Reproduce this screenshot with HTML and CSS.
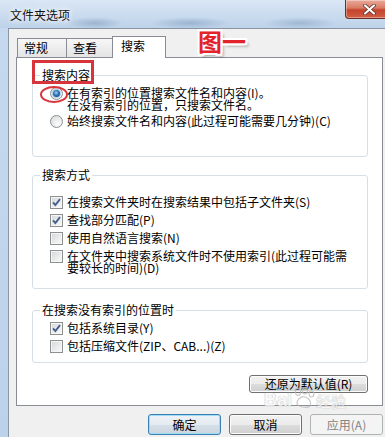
FILE: index.html
```html
<!DOCTYPE html>
<html lang="zh-CN">
<head>
  <meta charset="UTF-8">
  <title>文件夹选项</title>
  <link rel="stylesheet" href="styles.css">
</head>
<body>

  <div class="window">
    <div class="titlebar">
      <span class="title">文件夹选项</span>
      <span class="close">
        <svg width="13" height="11" viewBox="0 0 13 11">
          <path d="M2 1.5 L11 9.5 M11 1.5 L2 9.5" stroke="#5a2a22" stroke-width="3.6" stroke-linecap="round"/>
          <path d="M2 1.5 L11 9.5 M11 1.5 L2 9.5" stroke="#fff" stroke-width="2.2" stroke-linecap="round"/>
        </svg>
      </span>
    </div>

    <div class="client">
      <div class="tabs">
        <div class="tab">常规</div>
        <div class="tab">查看</div>
        <div class="tab active">搜索</div>
      </div>

      <div class="panel">
        <!-- 搜索内容 -->
        <div class="group group-content">
          <div class="legend">搜索内容</div>
          <div class="opts">
            <div class="opt"><span class="rd checked"><span class="dot"></span></span><span class="lines"><span class="line">在有索引的位置搜索文件名和内容(I)。</span><span class="line">在没有索引的位置，只搜索文件名。</span></span></div>
            <div class="opt"><span class="rd"></span><span>始终搜索文件名和内容(此过程可能需要几分钟)(C)</span></div>
          </div>
        </div>

        <!-- 搜索方式 -->
        <div class="group group-mode">
          <div class="legend">搜索方式</div>
          <div class="opts">
            <div class="opt"><span class="cb"><svg width="11" height="11" viewBox="0 0 11 11"><path d="M2 5.3 L4.4 8 L9 2.2" fill="none" stroke="#44608c" stroke-width="1.9"/></svg></span><span>在搜索文件夹时在搜索结果中包括子文件夹(S)</span></div>
            <div class="opt"><span class="cb"><svg width="11" height="11" viewBox="0 0 11 11"><path d="M2 5.3 L4.4 8 L9 2.2" fill="none" stroke="#44608c" stroke-width="1.9"/></svg></span><span>查找部分匹配(P)</span></div>
            <div class="opt"><span class="cb"></span><span>使用自然语言搜索(N)</span></div>
            <div class="opt"><span class="cb"></span><span class="lines"><span class="line">在文件夹中搜索系统文件时不使用索引(此过程可能需</span><span class="line">要较长的时间)(D)</span></span></div>
          </div>
        </div>

        <!-- 在搜索没有索引的位置时 -->
        <div class="group group-noindex">
          <div class="legend">在搜索没有索引的位置时</div>
          <div class="opts">
            <div class="opt"><span class="cb"><svg width="11" height="11" viewBox="0 0 11 11"><path d="M2 5.3 L4.4 8 L9 2.2" fill="none" stroke="#44608c" stroke-width="1.9"/></svg></span><span>包括系统目录(Y)</span></div>
            <div class="opt"><span class="cb"></span><span>包括压缩文件(ZIP、CAB...)(Z)</span></div>
          </div>
        </div>

        <div class="restore-row">
          <button class="btn restore">还原为默认值(R)</button>
        </div>
      </div>

      <div class="actions">
        <button class="btn default">确定</button>
        <button class="btn">取消</button>
        <button class="btn" disabled>应用(A)</button>
      </div>
    </div>

    <!-- annotations drawn over the dialog -->
    <div class="mark-box"></div>
    <div class="mark-ring"></div>
    <div class="caption">图一</div>

    <div class="watermark">
      <span class="wm-bai">Bai</span>
      <svg width="24" height="22" viewBox="0 0 24 22">
        <g fill="none" stroke="#b9b9b9" stroke-width="1.2">
          <ellipse cx="6" cy="5" rx="2.6" ry="3.4"/>
          <ellipse cx="13" cy="3.8" rx="2.6" ry="3.2"/>
          <ellipse cx="19.5" cy="7" rx="2.4" ry="3"/>
          <path d="M5 17 C5 11 11 9 13 10 C17 11 20 15 18 19 C16 21 8 21 5 17 Z"/>
        </g>
      </svg>
      <span class="wm-jy">经验</span>
    </div>
  </div>

</body>
</html>
```

FILE: styles.css
```css
* { box-sizing: border-box; }
body { margin: 0; font-family: "Noto Sans CJK SC", sans-serif; font-size: 12px; color: #000; }

.window {
  position: relative; width: 385px; height: 437px; overflow: hidden;
  background: linear-gradient(#c6d9ee, #bcd2ea);
}

/* title bar */
.titlebar {
  height: 28px; display: flex; justify-content: space-between; align-items: flex-start;
  background:
    radial-gradient(ellipse 28px 6px at 95px 23px, rgba(110,140,178,.45), transparent),
    radial-gradient(ellipse 40px 6px at 190px 23px, rgba(110,140,178,.45), transparent),
    radial-gradient(ellipse 36px 6px at 300px 23px, rgba(110,140,178,.4), transparent),
    linear-gradient(#dae7f5, #bdd2e9);
}
.title { padding: 8px 0 0 10px; line-height: 14px; color: #111; text-shadow: 0 0 4px #fff, 0 0 7px #fff; }
.close {
  width: 48px; height: 19px; margin-right: -8px;
  display: flex; align-items: center; justify-content: center;
  border: 1px solid #6b2e24; border-top: none; border-radius: 0 0 0 4px;
  background: linear-gradient(#e9aa9a, #d87a63 45%, #c4432c 55%, #d25f45);
  box-shadow: inset 0 0 0 1px rgba(255,255,255,.35);
}

/* client area */
.client {
  margin-left: 8px; height: 409px; background: #f0f0f0;
  border-left: 1px solid #8a95a3; border-top: 1px solid #8a95a3;
  padding: 7px 2px 0 7px;
}

.tabs { display: flex; align-items: flex-end; padding-left: 1px; }
.tab {
  height: 19px; line-height: 18px; padding: 0 18px 0 6px; margin-right: -1px;
  border: 1px solid #898c95; border-bottom: none;
  background: linear-gradient(#f7f7f7, #e4e4e4);
}
.tab.active {
  position: relative; z-index: 2;
  height: 22px; margin: 0 -2px -1px -3px; padding: 0 20px 0 8px;
  background: #fff;
}

.panel {
  position: relative; width: 367px; height: 349px;
  border: 1px solid #898c95; background: #fff;
  padding: 0 14px 0 15px;
}

/* group boxes */
.group { border: 1px solid #d5dfe5; border-radius: 3px; padding: 0 10px 0 17px; }
.legend {
  width: fit-content; margin: -8px 0 0 -10px; padding: 0 2px;
  line-height: 14px; background: #fff;
}
.group-content { margin-top: 17px; padding-bottom: 28px; }
.group-content .opts { margin-top: 5px; }
.group-mode { margin-top: 18px; padding-bottom: 15px; }
.group-mode .opts { margin-top: 14px; }
.group-noindex { margin-top: 21px; padding-bottom: 9px; }
.group-noindex .opts { margin-top: 5px; }

.opt { display: flex; align-items: flex-start; line-height: 11px; white-space: nowrap; }
.opt + .opt { margin-top: 5px; }
.lines { display: flex; flex-direction: column; gap: 1px; }
.line { display: block; height: 11px; }

.cb {
  flex: none; width: 13px; height: 13px; margin-right: 4px;
  border: 1px solid #8e8f8f;
  background: linear-gradient(135deg, #d3d6da, #fbfbfb);
  box-shadow: inset 0 0 0 1px #f6f6f6;
}
.cb svg { display: block; }

.rd {
  flex: none; width: 13px; height: 13px; margin-right: 4px; border-radius: 50%;
  border: 1px solid #8e8f8f;
  background: radial-gradient(circle at 65% 70%, #fdfdfd, #d2d5d9);
  display: flex; align-items: center; justify-content: center;
}
.rd .dot {
  width: 7px; height: 7px; border-radius: 50%;
  background: radial-gradient(circle at 45% 40%, #a9d6f5 0, #2e6fb4 45%, #0f3770 100%);
  box-shadow: 0 0 0 1px #a7cdea;
}

/* buttons */
.btn {
  font: inherit; font-size: 12px; color: #000;
  width: 73px; height: 21px; padding: 0; line-height: 19px;
  border: 1px solid #707070; border-radius: 3px;
  background: linear-gradient(#f2f2f2 0, #ebebeb 50%, #dddddd 50%, #cfcfcf 100%);
  box-shadow: inset 0 0 0 1px #fcfcfc;
}
.btn.default {
  border-color: #3c7fb1;
  background: linear-gradient(#eef3f7 0, #e4ebf1 50%, #d7e0e8 50%, #cad6e0 100%);
  box-shadow: inset 0 0 0 1px #9fdcf6;
}
.btn:disabled { border-color: #adb2b5; background: #f4f4f4; color: #838383; box-shadow: none; }

.restore-row { display: flex; justify-content: flex-end; margin-top: 12px; }
.btn.restore { width: 119px; height: 18px; line-height: 16px; }

.actions { display: flex; justify-content: flex-end; gap: 8px; margin-top: 8px; }

/* red annotations */
.mark-box {
  position: absolute; left: 32px; top: 60px; width: 62px; height: 24px;
  border: 3px solid #d8343c;
}
.mark-ring {
  position: absolute; left: 40px; top: 86px; width: 28px; height: 17px;
  border: 2px solid #d8343c; border-radius: 50%;
}
.caption {
  position: absolute; left: 198px; top: 27px;
  font-size: 24px; line-height: 28px; font-weight: 700; color: #e3232b;
  text-shadow: 2px 0 0 #fff, -2px 0 0 #fff, 0 2px 0 #fff, 0 -2px 0 #fff,
    2px 2px 0 #fff, -2px -2px 0 #fff, 2px -2px 0 #fff, -2px 2px 0 #fff,
    3px 3px 3px rgba(0,0,0,.35);
}

/* faint watermark */
.watermark {
  position: absolute; left: 264px; top: 387px;
  display: flex; align-items: flex-end; opacity: .75;
}
.wm-bai {
  font-family: "Liberation Sans", sans-serif; font-weight: 700; font-size: 18px; line-height: 18px;
  color: #f7f7f7; text-shadow: 0 0 1px #a8a8a8, 0 0 1px #a8a8a8;
}
.wm-jy {
  font-size: 15px; line-height: 16px; color: #f7f7f7;
  text-shadow: 0 0 1px #a8a8a8, 0 0 1px #a8a8a8;
}
```
